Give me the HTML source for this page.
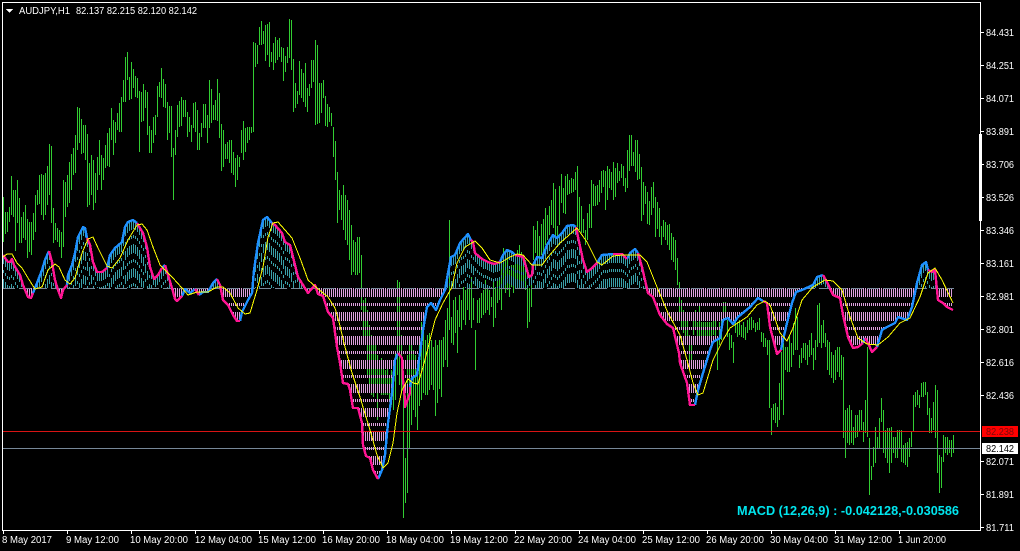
<!DOCTYPE html>
<html><head><meta charset="utf-8"><title>AUDJPY,H1</title>
<style>html,body{margin:0;padding:0;background:#000;width:1020px;height:551px;overflow:hidden}svg{display:block}text{font-family:"Liberation Sans",sans-serif;font-size:10px;fill:#fff}</style></head>
<body>
<svg width="1020" height="551" viewBox="0 0 1020 551" xmlns="http://www.w3.org/2000/svg" shape-rendering="crispEdges">
<defs>
<pattern id="pk" patternUnits="userSpaceOnUse" width="2" height="24"><rect x="1" y="0" width="1" height="9" fill="#DDA0DD"/><rect x="1" y="15" width="1" height="3" fill="#DDA0DD"/></pattern>
<clipPath id="h"><polygon points="3,288 3,255 5,258 8,262 10,262 12,259 14,265 17,270 20,275 23,285 28,297 31,298 33,293 37,283 42,270 45,260 49,251 52,262 55,280 58,290 61,298 63,290 67,285 68,275 72,265 75,253 78,237 83,227 85,228 87,238 90,245 93,262 97,272 102,272 107,268 110,255 115,248 122,242 125,227 128,222 133,220 137,223 143,233 147,247 150,267 154,279 158,275 162,268 165,265 168,275 172,288 175,299 177,301 182,296 185,289 190,293 195,289 199,295 203,292 208,292 213,283 217,279 220,285 223,300 228,305 233,315 237,321 240,321 242,312 248,300 252,293 254,270 258,243 263,220 267,217 272,223 275,225 282,233 285,242 290,245 295,265 298,277 303,285 308,293 315,285 318,294 323,296 328,312 333,318 337,347 340,363 343,383 348,384 350,390 353,408 358,408 362,423 363,445 366,456 370,458 373,470 378,479 382,470 385,455 388,423 392,393 395,360 398,353 402,358 403,380 405,400 405,407 410,393 410,387 412,378 417,375 420,353 423,330 427,307 431,303 436,310 440,300 445,290 448,273 451,257 455,255 460,243 468,234 471,240 473,242 475,253 482,259 488,262 494,264 500,262 503,255 507,250 512,252 515,255 523,257 527,270 529,277 532,275 533,265 537,257 542,258 547,245 553,235 557,238 562,233 567,226 573,225 576,227 578,237 583,260 587,272 592,268 597,263 602,255 613,254 622,254 627,259 630,253 635,249 638,253 642,267 648,293 653,297 660,315 667,324 673,328 679,353 680,363 687,383 690,405 695,405 698,390 703,373 710,350 713,342 720,338 723,320 728,318 733,324 738,317 750,307 758,298 763,301 767,303 770,327 777,354 781,350 783,340 787,323 792,303 796,292 802,290 813,285 817,277 823,275 827,282 833,295 840,298 843,315 848,337 853,348 858,347 863,343 865,338 868,343 872,352 877,347 882,330 887,327 895,323 898,317 907,320 912,307 917,283 922,265 926,262 928,270 932,272 935,270 938,300 943,303 947,307 953,310 953,288"/></clipPath>
</defs>
<rect width="1020" height="551" fill="#000"/>
<!-- price bars -->
<path stroke="#32CD32" stroke-width="1" fill="none" d="M3.5 197V242M5.5 212V234M7.5 212V232M9.5 207V222M11.5 176V215M13.5 190V217M15.5 190V251M17.5 180V223M19.5 198V243M21.5 217V243M23.5 212V238M25.5 205V240M27.5 219V258M29.5 222V252M31.5 222V255M33.5 213V240M35.5 195V232M37.5 190V205M39.5 175V204M41.5 174V215M43.5 175V220M45.5 173V215M47.5 166V205M49.5 144V195M51.5 146V223M53.5 208V243M55.5 223V240M57.5 228V242M59.5 230V247M61.5 232V258M63.5 180V247M65.5 182V217M67.5 175V207M69.5 162V203M71.5 154V190M73.5 148V175M75.5 135V173M77.5 107V150M79.5 108V143M81.5 119V154M83.5 125V153M85.5 125V160M87.5 134V207M89.5 163V205M91.5 155V195M93.5 160V210M95.5 173V203M97.5 157V190M99.5 140V175M101.5 155V190M103.5 158V180M105.5 145V168M107.5 133V166M109.5 128V167M111.5 108V140M113.5 120V155M115.5 122V143M117.5 113V130M119.5 103V132M121.5 97V132M123.5 80V102M125.5 57V102M127.5 52V80M129.5 77V100M131.5 62V99M133.5 69V88M135.5 76V97M137.5 78V98M139.5 91V152M141.5 92V122M143.5 84V121M145.5 90V108M147.5 92V135M149.5 126V153M151.5 130V153M153.5 117V143M155.5 115V135M157.5 86V117M159.5 82V97M161.5 68V98M163.5 79V107M165.5 84V108M167.5 102V140M169.5 106V133M171.5 106V157M173.5 148V200M175.5 130V155M177.5 105V137M179.5 101V127M181.5 97V126M183.5 100V117M185.5 100V117M187.5 112V137M189.5 117V132M191.5 125V142M193.5 103V128M195.5 102V132M197.5 110V150M199.5 133V150M201.5 123V137M203.5 104V128M205.5 104V128M207.5 115V143M209.5 80V128M211.5 89V123M213.5 105V120M215.5 100V120M217.5 79V121M219.5 93V138M221.5 124V171M223.5 130V167M225.5 144V159M227.5 142V159M229.5 140V163M231.5 140V173M233.5 152V175M235.5 158V187M237.5 155V180M239.5 157V167M241.5 130V153M243.5 121V160M245.5 128V152M247.5 127V143M249.5 127V140M251.5 127V133M253.5 42V132M255.5 43V67M257.5 45V64M259.5 27V45M261.5 21V45M263.5 31V44M265.5 25V61M267.5 24V55M269.5 22V67M271.5 52V62M273.5 43V70M275.5 37V63M277.5 40V60M279.5 38V57M281.5 47V62M283.5 48V81M285.5 56V72M287.5 47V63M289.5 19V58M291.5 20V70M293.5 59V112M295.5 83V108M297.5 91V104M299.5 61V95M301.5 69V98M303.5 73V102M305.5 63V107M307.5 88V112M309.5 84V96M311.5 60V88M313.5 60V82M315.5 40V125M317.5 45V124M319.5 83V123M321.5 83V113M323.5 80V98M325.5 96V126M327.5 104V127M329.5 107V122M331.5 113V126M333.5 127V157M335.5 141V180M337.5 172V223M339.5 190V210M341.5 195V220M343.5 185V230M345.5 195V240M347.5 200V245M349.5 210V260M351.5 225V275M353.5 240V272M355.5 242V275M357.5 237V275M359.5 237V273M361.5 255V310M363.5 300V340M365.5 298V345M367.5 310V378M369.5 325V385M371.5 335V395M373.5 345V397M375.5 340V385M377.5 355V420M379.5 360V390M381.5 358V395M383.5 363V395M385.5 370V395M387.5 362V395M389.5 378V400M391.5 370V405M393.5 363V410M395.5 353V400M397.5 280V375M399.5 282V385M401.5 335V393M403.5 375V518M405.5 458V503M407.5 355V493M409.5 345V448M411.5 340V425M413.5 350V410M415.5 355V417M417.5 363V430M419.5 345V406M421.5 322V400M423.5 333V393M425.5 340V395M427.5 335V395M429.5 333V390M431.5 340V385M433.5 347V390M435.5 340V416M437.5 345V403M439.5 340V389M441.5 340V397M443.5 337V367M445.5 320V360M447.5 308V367M449.5 220V330M451.5 317V343M453.5 300V345M455.5 297V333M457.5 310V353M459.5 295V327M461.5 300V330M463.5 287V320M465.5 290V325M467.5 285V310M469.5 288V320M471.5 277V328M473.5 298V320M475.5 330V370M477.5 300V323M479.5 298V323M481.5 293V318M483.5 290V315M485.5 280V313M487.5 285V310M489.5 290V315M491.5 297V307M493.5 280V327M495.5 288V318M497.5 280V303M499.5 278V300M501.5 257V310M503.5 248V287M505.5 253V293M507.5 258V290M509.5 270V297M511.5 265V287M513.5 265V293M515.5 255V285M517.5 250V280M519.5 245V283M521.5 252V285M523.5 255V288M525.5 260V290M527.5 288V328M529.5 288V322M531.5 283V307M533.5 226V260M535.5 230V253M537.5 221V263M539.5 236V265M541.5 224V255M543.5 219V260M545.5 208V245M547.5 215V240M549.5 206V235M551.5 200V225M553.5 183V228M555.5 189V237M557.5 226V245M559.5 186V225M561.5 174V203M563.5 188V213M565.5 176V214M567.5 174V195M569.5 180V194M571.5 178V193M573.5 179V192M575.5 172V190M577.5 166V227M579.5 197V230M581.5 206V233M583.5 219V233M585.5 230V245M587.5 213V240M589.5 204V228M591.5 180V228M593.5 184V206M595.5 186V206M597.5 185V205M599.5 180V202M601.5 171V193M603.5 170V187M605.5 171V210M607.5 166V200M609.5 169V188M611.5 172V190M613.5 162V200M615.5 168V197M617.5 163V183M619.5 171V181M621.5 164V178M623.5 166V186M625.5 178V192M627.5 150V188M629.5 135V171M631.5 135V166M633.5 152V166M635.5 140V172M637.5 140V180M639.5 154V179M641.5 167V221M643.5 182V215M645.5 186V204M647.5 192V224M649.5 201V225M651.5 187V215M653.5 182V208M655.5 197V237M657.5 202V229M659.5 208V237M661.5 226V245M663.5 220V237M665.5 222V240M667.5 225V245M669.5 224V250M671.5 233V260M673.5 237V262M675.5 240V270M677.5 258V285M679.5 282V320M681.5 300V330M683.5 310V333M685.5 318V338M687.5 320V345M689.5 335V360M691.5 345V365M693.5 315V335M695.5 310V330M697.5 322V337M699.5 305V337M701.5 322V337M703.5 322V337M705.5 322V337M707.5 322V337M709.5 322V337M711.5 322V337M713.5 315V335M715.5 320V340M717.5 340V370M719.5 322V345M721.5 320V340M723.5 302V315M725.5 302V318M727.5 320V337M729.5 333V350M731.5 335V348M733.5 342V363M735.5 320V333M737.5 322V337M739.5 320V335M741.5 325V337M743.5 322V338M745.5 327V340M747.5 320V333M749.5 318V330M751.5 317V330M753.5 320V328M755.5 323V332M757.5 322V330M759.5 318V330M761.5 332V342M763.5 333V347M765.5 338V347M767.5 340V355M769.5 340V408M771.5 408V435M773.5 404V420M775.5 403V423M777.5 407V427M779.5 383V420M781.5 352V400M783.5 343V415M785.5 347V370M787.5 347V372M789.5 335V372M791.5 343V367M793.5 323V355M795.5 308V350M797.5 317V350M799.5 355V368M801.5 348V363M803.5 343V358M805.5 343V360M807.5 345V365M809.5 340V357M811.5 333V355M813.5 348V370M815.5 340V360M817.5 305V347M819.5 303V343M821.5 325V348M823.5 320V343M825.5 333V347M827.5 340V370M829.5 342V375M831.5 352V378M833.5 355V383M835.5 350V380M837.5 347V372M839.5 347V377M841.5 355V380M843.5 357V438M845.5 410V458M847.5 408V443M849.5 405V445M851.5 410V443M853.5 427V445M855.5 415V438M857.5 415V437M859.5 410V432M861.5 410V430M863.5 422V442M865.5 400V433M867.5 347V437M869.5 438V495M871.5 466V480M873.5 447V467M875.5 427V463M877.5 437V448M879.5 418V448M881.5 398V422M883.5 410V453M885.5 430V458M887.5 428V463M889.5 428V473M891.5 427V463M893.5 437V453M895.5 437V458M897.5 430V458M899.5 430V448M901.5 430V462M903.5 445V463M905.5 443V465M907.5 442V467M909.5 438V457M911.5 432V447M913.5 395V432M915.5 392V407M917.5 390V405M919.5 395V408M921.5 383V397M923.5 382V397M925.5 382V395M927.5 392V415M929.5 408V433M931.5 418V433M933.5 402V430M935.5 385V438M937.5 390V473M939.5 455V493M941.5 457V488M943.5 435V462M945.5 437V453M947.5 437V455M949.5 440V453M951.5 440V457M953.5 435V453"/>
<!-- horizontal lines -->
<rect x="3" y="431" width="977" height="1" fill="#D81414"/>
<rect x="3" y="448" width="977" height="1" fill="#778899"/>
<!-- histogram negative -->
<g clip-path="url(#h)">
<rect x="3" y="288" width="951" height="200" fill="url(#pk)"/>
</g>
<!-- histogram positive: dashed columns following the line -->
<path stroke="#3A9FA8" stroke-width="1" fill="none" stroke-dasharray="9 6 3 6" d="M3.5 255V288M5.5 258V288M7.5 261V288M9.5 262V288M11.5 260V288M13.5 262V288M15.5 267V288M17.5 270V288M19.5 273V288M21.5 278V288M23.5 285V288M37.5 283V288M39.5 278V288M41.5 273V288M43.5 267V288M45.5 260V288M47.5 255V288M49.5 251V288M51.5 258V288M53.5 268V288M55.5 280V288M57.5 287V288M65.5 287V288M67.5 285V288M69.5 272V288M71.5 267V288M73.5 261V288M75.5 253V288M77.5 242V288M79.5 235V288M81.5 231V288M83.5 227V288M85.5 228V288M87.5 238V288M89.5 243V288M91.5 251V288M93.5 262V288M95.5 267V288M97.5 272V288M99.5 272V288M101.5 272V288M103.5 271V288M105.5 270V288M107.5 268V288M109.5 259V288M111.5 254V288M113.5 251V288M115.5 248V288M117.5 246V288M119.5 245V288M121.5 243V288M123.5 237V288M125.5 227V288M127.5 224V288M129.5 222V288M131.5 221V288M133.5 220V288M135.5 221V288M137.5 223V288M139.5 226V288M141.5 230V288M143.5 233V288M145.5 240V288M147.5 247V288M149.5 260V288M151.5 270V288M153.5 276V288M155.5 278V288M157.5 276V288M159.5 273V288M161.5 270V288M163.5 267V288M165.5 265V288M167.5 272V288M169.5 279V288M171.5 285V288M213.5 283V288M215.5 281V288M217.5 279V288M219.5 283V288M253.5 281V288M255.5 263V288M257.5 250V288M259.5 238V288M261.5 229V288M263.5 220V288M265.5 218V288M267.5 217V288M269.5 219V288M271.5 222V288M273.5 224V288M275.5 225V288M277.5 227V288M279.5 229V288M281.5 232V288M283.5 236V288M285.5 242V288M287.5 243V288M289.5 245V288M291.5 249V288M293.5 257V288M295.5 265V288M297.5 273V288M299.5 279V288M301.5 282V288M303.5 285V288M313.5 287V288M315.5 285V288M447.5 279V288M449.5 268V288M451.5 257V288M453.5 256V288M455.5 255V288M457.5 250V288M459.5 245V288M461.5 242V288M463.5 241V288M465.5 239V288M467.5 235V288M469.5 236V288M471.5 240V288M473.5 242V288M475.5 253V288M477.5 255V288M479.5 257V288M481.5 258V288M483.5 260V288M485.5 260V288M487.5 261V288M489.5 262V288M491.5 263V288M493.5 264V288M495.5 263V288M497.5 263V288M499.5 262V288M501.5 260V288M503.5 255V288M505.5 252V288M507.5 250V288M509.5 251V288M511.5 252V288M513.5 253V288M515.5 255V288M517.5 255V288M519.5 256V288M521.5 257V288M523.5 257V288M525.5 263V288M527.5 270V288M529.5 277V288M531.5 276V288M533.5 265V288M535.5 261V288M537.5 257V288M539.5 257V288M541.5 258V288M543.5 255V288M545.5 250V288M547.5 245V288M549.5 242V288M551.5 238V288M553.5 235V288M555.5 236V288M557.5 238V288M559.5 236V288M561.5 234V288M563.5 232V288M565.5 229V288M567.5 226V288M569.5 226V288M571.5 225V288M573.5 225V288M575.5 226V288M577.5 232V288M579.5 246V288M581.5 255V288M583.5 260V288M585.5 266V288M587.5 272V288M589.5 270V288M591.5 269V288M593.5 267V288M595.5 265V288M597.5 263V288M599.5 260V288M601.5 257V288M603.5 255V288M605.5 255V288M607.5 255V288M609.5 254V288M611.5 254V288M613.5 254V288M615.5 254V288M617.5 254V288M619.5 254V288M621.5 254V288M623.5 255V288M625.5 257V288M627.5 259V288M629.5 255V288M631.5 252V288M633.5 251V288M635.5 249V288M637.5 252V288M639.5 257V288M641.5 263V288M643.5 271V288M645.5 280V288M809.5 287V288M811.5 286V288M813.5 285V288M815.5 281V288M817.5 277V288M819.5 276V288M821.5 276V288M823.5 275V288M825.5 278V288M827.5 282V288M829.5 286V288M917.5 283V288M919.5 276V288M921.5 269V288M923.5 264V288M925.5 262V288M927.5 266V288M929.5 270V288M931.5 272V288M933.5 271V288M935.5 270V288"/>
<path d="M3 288.5H954" stroke="#778899" stroke-width="1" stroke-dasharray="12 4" fill="none"/>
<!-- MACD line -->
<g fill="none" stroke-width="2.4" stroke-linejoin="round">
<path stroke="#1E90FF" d="M33 293L37 283 42 270 45 260 49 251M67 285L68 275 72 265 75 253 78 237 83 227 85 228 87 238M107 268L110 255 115 248 122 242 125 227 128 222 133 220 137 223M162 268L165 265M182 296L185 289 190 293 195 289M199 295L203 292 208 292 213 283 217 279M240 321L242 312 248 300 252 293 254 270 258 243 263 220 267 217 272 223M378 479L382 470 385 455 388 423 392 393 395 360 398 353M410 387L412 378 417 375 420 353 423 330 427 307 431 303 436 310 440 300 445 290 448 273 451 257 455 255 460 243 468 234 471 240M500 262L503 255 507 250 512 252 515 255M533 265L537 257 542 258 547 245 553 235 557 238 562 233 567 226 573 225 576 227M597 263L602 255 613 254M627 259L630 253 635 249 638 253M695 405L698 390 703 373 710 350 713 342 720 338 723 320 728 318 733 324 738 317 750 307 758 298 763 301M781 350L783 340 787 323 792 303 796 292 802 290 813 285 817 277 823 275M863 343L865 338M877 347L882 330 887 327 895 323 898 317 907 320 912 307 917 283 922 265 926 262 928 270"/>
<path stroke="#FF1493" d="M3 255L5 258 8 262 10 262 12 259 14 265 17 270 20 275 23 285 28 297 31 298 33 293M49 251L52 262 55 280 58 290 61 298 63 290 67 285M87 238L90 245 93 262 97 272 102 272 107 268M137 223L143 233 147 247 150 267 154 279 158 275 162 268M165 265L168 275 172 288 175 299 177 301 182 296M195 289L199 295M217 279L220 285 223 300 228 305 233 315 237 321 240 321M272 223L275 225 282 233 285 242 290 245 295 265 298 277 303 285 308 293 315 285 318 294 323 296 328 312 333 318 337 347 340 363 343 383 348 384 350 390 353 408 358 408 362 423 363 445 366 456 370 458 373 470 378 479M398 353L402 358 403 380 405 400 405 407 410 393 410 387M471 240L473 242 475 253 482 259 488 262 494 264 500 262M515 255L523 257 527 270 529 277 532 275 533 265M576 227L578 237 583 260 587 272 592 268 597 263M613 254L622 254 627 259M638 253L642 267 648 293 653 297 660 315 667 324 673 328 679 353 680 363 687 383 690 405 695 405M763 301L767 303 770 327 777 354 781 350M823 275L827 282 833 295 840 298 843 315 848 337 853 348 858 347 863 343M865 338L868 343 872 352 877 347M928 270L932 272 935 270 938 300 943 303 947 307 953 310"/>
</g>
<!-- signal line -->
<polyline fill="none" stroke="#FFFF00" stroke-width="1" points="3,257 7,254 12,254 17,263 22,268 28,278 35,289 42,287 48,270 55,264 59,267 65,280 70,284 75,278 82,253 88,239 93,237 98,248 107,266 112,268 120,258 128,240 137,225 142,224 147,230 153,247 160,265 167,272 173,278 182,288 188,295 197,292 208,292 217,287 223,287 230,293 238,308 245,314 250,313 257,290 263,267 268,237 273,223 278,222 292,238 300,258 308,280 317,288 328,297 335,308 339,322 345,347 352,373 360,397 363,407 370,430 377,455 383,468 388,463 393,443 397,413 402,390 408,379 413,383 418,384 423,367 428,348 435,320 443,303 452,287 457,263 465,247 475,241 482,248 490,260 500,263 510,257 517,254 523,255 532,265 542,265 548,257 560,243 577,228 587,242 597,262 602,265 613,256 623,255 640,255 647,262 657,287 668,313 680,335 687,360 693,383 698,395 703,393 713,360 723,340 730,328 747,317 757,305 765,301 770,305 780,333 787,341 793,328 802,300 813,287 825,280 833,281 842,290 850,317 858,338 867,344 878,345 888,337 900,323 910,318 920,297 928,273 935,268 942,280 953,303"/>
<!-- frame -->
<rect x="2" y="2" width="979" height="1" fill="#fff"/>
<rect x="2" y="2" width="1" height="529" fill="#fff"/>
<rect x="980" y="2" width="1" height="529" fill="#fff"/>
<rect x="2" y="530" width="979" height="1" fill="#fff"/>
<rect x="979" y="134" width="3" height="87" fill="#fff"/>
<!-- x ticks -->
<path stroke="#fff" stroke-width="1" fill="none" d="M3.5 531V534M67.5 531V534M131.5 531V534M195.5 531V534M259.5 531V534M323.5 531V534M387.5 531V534M451.5 531V534M515.5 531V534M579.5 531V534M643.5 531V534M707.5 531V534M771.5 531V534M835.5 531V534M899.5 531V534"/>
<!-- y ticks -->
<path stroke="#fff" stroke-width="1" fill="none" d="M981 32.5H984M981 65.5H984M981 98.5H984M981 131.5H984M981 164.5H984M981 197.5H984M981 230.5H984M981 263.5H984M981 296.5H984M981 329.5H984M981 362.5H984M981 395.5H984M981 461.5H984M981 494.5H984M981 527.5H984"/>
<!-- header -->
<polygon points="6,9 13,9 9.5,13" fill="#fff"/>
<text x="19" y="14" textLength="51" lengthAdjust="spacingAndGlyphs">AUDJPY,H1</text>
<text x="76" y="14" textLength="121" lengthAdjust="spacingAndGlyphs">82.137 82.215 82.120 82.142</text>
<!-- price labels -->
<text x="986" y="36" textLength="28" lengthAdjust="spacingAndGlyphs">84.431</text>
<text x="986" y="69" textLength="28" lengthAdjust="spacingAndGlyphs">84.251</text>
<text x="986" y="102" textLength="28" lengthAdjust="spacingAndGlyphs">84.071</text>
<text x="986" y="135" textLength="28" lengthAdjust="spacingAndGlyphs">83.891</text>
<text x="986" y="168" textLength="28" lengthAdjust="spacingAndGlyphs">83.706</text>
<text x="986" y="201" textLength="28" lengthAdjust="spacingAndGlyphs">83.526</text>
<text x="986" y="234" textLength="28" lengthAdjust="spacingAndGlyphs">83.346</text>
<text x="986" y="267" textLength="28" lengthAdjust="spacingAndGlyphs">83.161</text>
<text x="986" y="300" textLength="28" lengthAdjust="spacingAndGlyphs">82.981</text>
<text x="986" y="333" textLength="28" lengthAdjust="spacingAndGlyphs">82.801</text>
<text x="986" y="366" textLength="28" lengthAdjust="spacingAndGlyphs">82.616</text>
<text x="986" y="399" textLength="28" lengthAdjust="spacingAndGlyphs">82.436</text>
<text x="986" y="465" textLength="28" lengthAdjust="spacingAndGlyphs">82.071</text>
<text x="986" y="498" textLength="28" lengthAdjust="spacingAndGlyphs">81.891</text>
<text x="986" y="531" textLength="28" lengthAdjust="spacingAndGlyphs">81.711</text>
<rect x="982" y="426" width="36" height="11" fill="#FF0000"/>
<text x="986" y="435" textLength="28" lengthAdjust="spacingAndGlyphs" style="fill:#7a0a0a">82.238</text>
<rect x="982" y="443" width="36" height="11" fill="#fff"/>
<text x="986" y="452" textLength="28" lengthAdjust="spacingAndGlyphs" style="fill:#000">82.142</text>
<!-- time labels -->
<text x="2" y="543" textLength="50" lengthAdjust="spacingAndGlyphs">8 May 2017</text>
<text x="66" y="543" textLength="53" lengthAdjust="spacingAndGlyphs">9 May 12:00</text>
<text x="130" y="543" textLength="58" lengthAdjust="spacingAndGlyphs">10 May 20:00</text>
<text x="195" y="543" textLength="57" lengthAdjust="spacingAndGlyphs">12 May 04:00</text>
<text x="258" y="543" textLength="58" lengthAdjust="spacingAndGlyphs">15 May 12:00</text>
<text x="322" y="543" textLength="58" lengthAdjust="spacingAndGlyphs">16 May 20:00</text>
<text x="386" y="543" textLength="58" lengthAdjust="spacingAndGlyphs">18 May 04:00</text>
<text x="450" y="543" textLength="58" lengthAdjust="spacingAndGlyphs">19 May 12:00</text>
<text x="514" y="543" textLength="58" lengthAdjust="spacingAndGlyphs">22 May 20:00</text>
<text x="578" y="543" textLength="58" lengthAdjust="spacingAndGlyphs">24 May 04:00</text>
<text x="642" y="543" textLength="58" lengthAdjust="spacingAndGlyphs">25 May 12:00</text>
<text x="706" y="543" textLength="58" lengthAdjust="spacingAndGlyphs">26 May 20:00</text>
<text x="770" y="543" textLength="58" lengthAdjust="spacingAndGlyphs">30 May 04:00</text>
<text x="834" y="543" textLength="58" lengthAdjust="spacingAndGlyphs">31 May 12:00</text>
<text x="898" y="543" textLength="48" lengthAdjust="spacingAndGlyphs">1 Jun 20:00</text>
<!-- MACD caption -->
<text x="737" y="515" textLength="222" lengthAdjust="spacingAndGlyphs" style="font-size:13px;font-weight:bold;fill:#00E5EE">MACD (12,26,9) : -0.042128,-0.030586</text>
</svg>
</body></html>
